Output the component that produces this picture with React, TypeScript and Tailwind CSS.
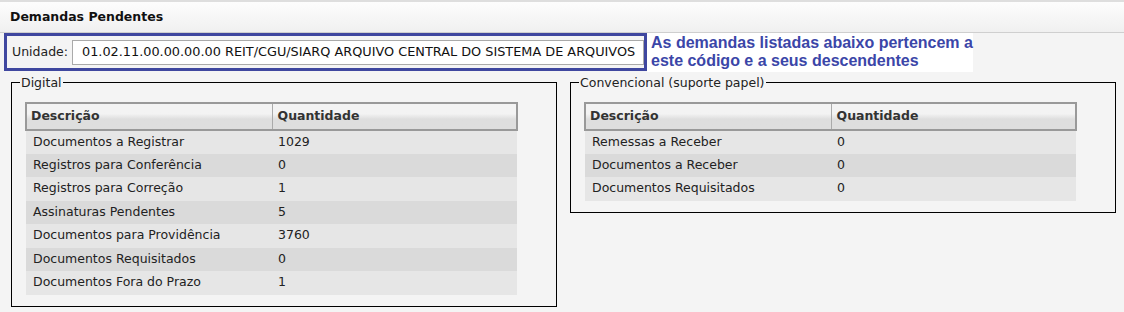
import React from 'react';

type Row = { descricao: string; quantidade: number };

const digital: Row[] = [
  { descricao: 'Documentos a Registrar', quantidade: 1029 },
  { descricao: 'Registros para Conferência', quantidade: 0 },
  { descricao: 'Registros para Correção', quantidade: 1 },
  { descricao: 'Assinaturas Pendentes', quantidade: 5 },
  { descricao: 'Documentos para Providência', quantidade: 3760 },
  { descricao: 'Documentos Requisitados', quantidade: 0 },
  { descricao: 'Documentos Fora do Prazo', quantidade: 1 },
];

const convencional: Row[] = [
  { descricao: 'Remessas a Receber', quantidade: 0 },
  { descricao: 'Documentos a Receber', quantidade: 0 },
  { descricao: 'Documentos Requisitados', quantidade: 0 },
];

const DemandTable: React.FC<{ rows: Row[] }> = ({ rows }) => (
  <table className="w-[493px] border-collapse text-[12.5px] text-[#222]">
    <thead>
      <tr className="h-[27px] bg-gradient-to-b from-[#f3f3f3] from-40% to-[#dedede] to-60%">
        <th className="w-[246px] border-2 border-r border-[#999] border-r-[#aaa] pl-[4px] text-left font-bold text-[#333]">
          Descrição
        </th>
        <th className="border-2 border-l-0 border-[#999] pl-[5px] text-left font-bold text-[#333]">
          Quantidade
        </th>
      </tr>
    </thead>
    <tbody>
      {rows.map((row, i) => (
        <tr key={row.descricao} className={`h-[23.5px] ${i % 2 === 0 ? 'bg-[#e6e6e6]' : 'bg-[#dadada]'}`}>
          <td className="pl-[7px]">{row.descricao}</td>
          <td className="pl-[6px]">{row.quantidade}</td>
        </tr>
      ))}
    </tbody>
  </table>
);

const Panel: React.FC<{ title: string; rows: Row[] }> = ({ title, rows }) => (
  <fieldset className="w-[546px] border border-black px-[13px] pb-[11px]">
    <legend className="-ml-[5px] px-[1px] text-[12.5px] leading-[15px] text-[#222]">{title}</legend>
    <div className="mt-[12px]">
      <DemandTable rows={rows} />
    </div>
  </fieldset>
);

const App: React.FC = () => {
  return (
    <div className="min-h-[312px] w-[1124px] bg-[#f4f4f4] font-['DejaVu_Sans',sans-serif]">
      {/* Page header */}
      <div className="flex h-[33px] items-center border-t-2 border-b border-t-[#dedede] border-b-[#cfcfcf] bg-gradient-to-b from-[#fdfdfd] to-[#f0f0f0] pl-[10px]">
        <h1 className="text-[12.5px] font-bold text-[#111]">Demandas Pendentes</h1>
      </div>

      {/* Unidade filter with note */}
      <div className="flex items-start">
        <div className="ml-[4px] flex h-[38px] w-[643px] items-center border-[3px] border-[#3f479f] pl-[5px]">
          <span className="text-[12.5px] text-[#222]">Unidade:</span>
          <div className="ml-[4px] flex h-[25px] w-[572px] items-center overflow-hidden whitespace-nowrap border border-[#aaa] bg-white pl-[9px] text-[12.85px] text-[#111]">
            01.02.11.00.00.00.00 REIT/CGU/SIARQ ARQUIVO CENTRAL DO SISTEMA DE ARQUIVOS
          </div>
        </div>
        <div className="h-[39px] w-[326px] bg-white pl-[4px] pt-[1px] font-['Liberation_Sans',Arial,sans-serif] text-[16px] font-bold leading-[18px] text-[#3b46a8]">
          As demandas listadas abaixo pertencem a
          <br />
          este código e a seus descendentes
        </div>
      </div>

      {/* Panels */}
      <div className="mt-[3px] flex items-start gap-[13px] pl-[11px]">
        <Panel title="Digital" rows={digital} />
        <Panel title="Convencional (suporte papel)" rows={convencional} />
      </div>
    </div>
  );
};

export default App;
